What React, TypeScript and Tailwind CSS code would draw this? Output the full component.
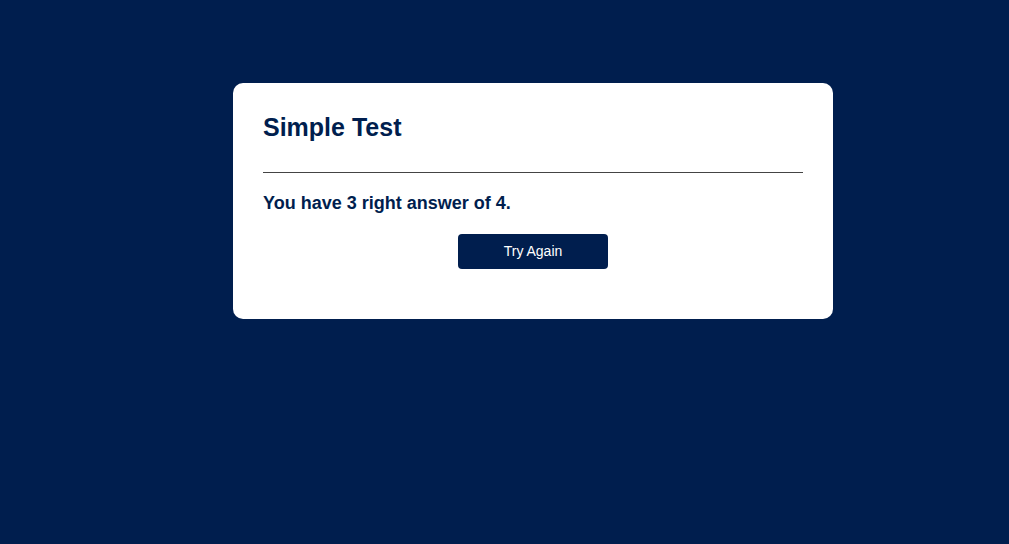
export default function App() {
  return (
    <div className="min-h-[544px] w-full bg-[#001e4e] pl-[57px] pt-[83px] font-['Liberation_Sans',Arial,sans-serif]">
      <div className="mx-auto w-[600px] rounded-[10px] bg-white px-[30px] pt-[30px] pb-[50px]">
        <h1 className="text-[25px] font-bold leading-[29px] text-[#001e4e]">Simple Test</h1>
        <hr className="mt-[30px] border-t border-[#444]" />
        <p className="mt-[20px] text-[18px] font-bold leading-[21px] text-[#001e4e]">
          You have 3 right answer of 4.
        </p>
        <div className="mt-[20px] flex justify-center">
          <button className="h-[35px] w-[150px] rounded-[4px] bg-[#001e4e] text-[14px] text-white">
            Try Again
          </button>
        </div>
      </div>
    </div>
  );
}
